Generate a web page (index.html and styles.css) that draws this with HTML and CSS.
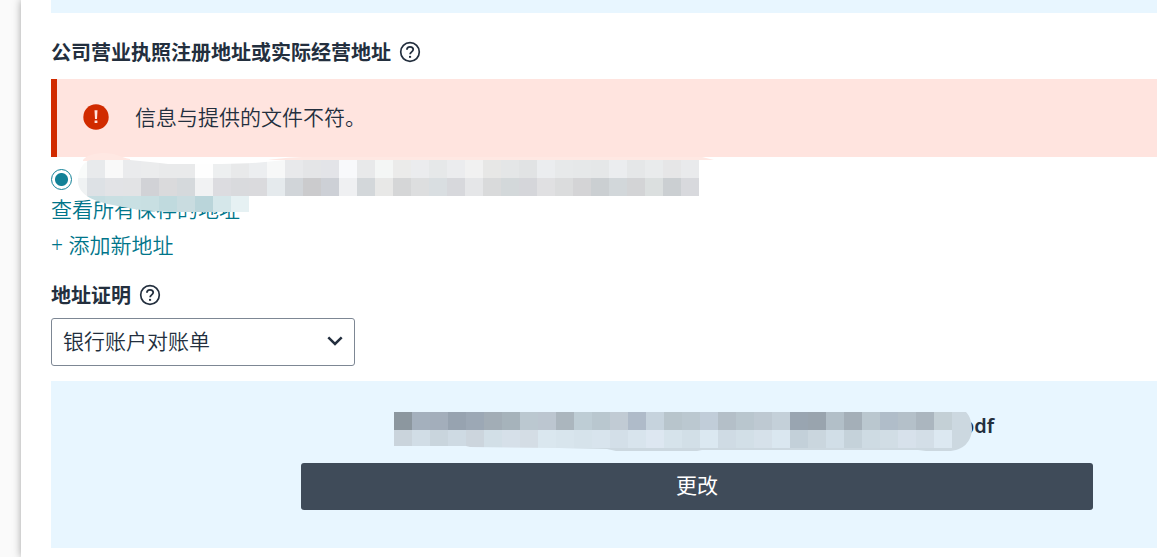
FILE: index.html
```
<!DOCTYPE html>
<html lang="zh-CN">
<head>
    <meta charset="UTF-8">
    <meta name="viewport" content="width=device-width, initial-scale=1.0">
    <title>地址信息</title>
    <link rel="stylesheet" href="styles.css">
</head>
<body>
    <main class="card">
        <div class="previous-panel"></div>

        <section class="address">
            <div class="heading">
                <h2>公司营业执照注册地址或实际经营地址</h2>
                <button type="button" class="help-button" aria-label="帮助">
                    <svg width="22" height="22" viewBox="0 0 22 22" fill="none" stroke="#232f3e">
                        <circle cx="11" cy="11" r="9.3" stroke-width="1.7"/>
                        <path d="M7.9 8.8C7.9 6.9 9.2 5.9 11 5.9s3.2 1 3.2 2.7c0 2.3-3.1 2.3-3.1 4.7" stroke-width="1.8"/>
                        <path d="M10 14.9h2.1v1.9H10z" fill="#232f3e" stroke="none"/>
                    </svg>
                </button>
            </div>

            <div class="alert" role="alert">
                <svg width="26" height="26" viewBox="0 0 26 26">
                    <circle cx="13" cy="13" r="12.7" fill="#d12b00"/>
                    <path d="M11.5 6.2h3l-.5 8.8h-2zM11.6 16.6h2.8v2.5h-2.8z" fill="#ffe4df"/>
                </svg>
                <p>信息与提供的文件不符。</p>
            </div>

            <div class="saved-address">
                <input type="radio" name="address" aria-label="已保存的地址" checked>
                <svg class="address-mask" width="640" height="62" viewBox="0 0 640 62" aria-hidden="true">
                    <clipPath id="addressClip">
                        <path d="M0 28C0 15 7 7 14 7H52C65 8 80 10 90 11H143C170 11 190 9 207 7H621V59H100C78 59 57 57 35 52C12 48 0 40 0 28Z"/>
                    </clipPath>
                    <path d="M5 7C9 2 17 0 27 0C36 0 42 4 52 6V8H5Z" fill="#ffe8e3"/>
                    <path d="M190 7C205 5 215 4 230 4H624L636 7Z" fill="#ffe8e3"/>
                    <g clip-path="url(#addressClip)">
                        <rect y="7" width="9" height="18" fill="#f9fbfa"/>
                        <rect y="25" width="9" height="18" fill="#eff2f3"/>
                        <g id="addressPixels"></g>
                    </g>
                </svg>
            </div>
            <a class="link" href="#">查看所有保存的地址</a>
            <a class="link" href="#">+ 添加新地址</a>
        </section>

        <section class="proof">
            <div class="heading">
                <h2><label for="proofType">地址证明</label></h2>
                <button type="button" class="help-button" aria-label="帮助">
                    <svg width="22" height="22" viewBox="0 0 22 22" fill="none" stroke="#232f3e">
                        <circle cx="11" cy="11" r="9.3" stroke-width="1.7"/>
                        <path d="M7.9 8.8C7.9 6.9 9.2 5.9 11 5.9s3.2 1 3.2 2.7c0 2.3-3.1 2.3-3.1 4.7" stroke-width="1.8"/>
                        <path d="M10 14.9h2.1v1.9H10z" fill="#232f3e" stroke="none"/>
                    </svg>
                </button>
            </div>
            <div class="select-box">
                <select id="proofType">
                    <option>银行账户对账单</option>
                </select>
                <svg width="16" height="10" viewBox="0 0 16 10" fill="none" stroke="#232f3e" stroke-width="2.5">
                    <path d="M1.3 1.4L8 8l6.7-6.6"/>
                </svg>
            </div>

            <div class="file-panel">
                <div class="file-name">
                    <svg width="578" height="39" viewBox="0 0 578 39" aria-hidden="true">
                        <path d="M558 0H572C576 4 578 11 578 18C577 29 570 39 554 39H532L524 38H308L303 39H222L213 37L165 36L160 34H558Z" fill="#ccd8e0"/>
                        <clipPath id="fileClip">
                            <path d="M0 0H578V36H160L76 35L72 34H0Z"/>
                        </clipPath>
                        <g id="filePixels" clip-path="url(#fileClip)"></g>
                    </svg>
                    <span>pdf</span>
                </div>
                <button type="button" class="change-button">更改</button>
            </div>
        </section>
    </main>

    <script>
        // Each row is a list of cell colours, every cell is 18px
        const addressRows = [
            'e8eaec f9f9f9 eaebed ebeced e9eaeb e9eaeb fefefe edeff0 e8e9ea eceef0 f7f8f8 e8e9eb e4e5e7 e3e4e8 f8f9fb e8e9ea f4f6f5 ebebea ebecee e6e8e9 ebecee f1f1f1 e7e7e6 e4e6e7 e1e3e4 ebedef e7e9ea e6e8e9 e5e7e8 ebedef e5e7e8 e9ebec e6e6e7 e9eaec',
            'dde1e5 e2e3e6 e2e3e5 d1d2d6 dadadc d5d9dc f1f2f3 dcdce0 d9dadd dadadd e5eaed d1d5d9 cbcbcd cdd0d6 eff0f2 d3d7da e8e8e7 d5d6d7 dddedf d9dee1 d7d8dc e5e6e8 d9dadb d3d8da d5d6da e0e0e2 dbdcdd d4d4d6 cbcfd2 d2d7da d3d4d6 dbdfdf cbcfd2 d8d9dd',
            'c5dde1 c9dfe2 c9e0e3 c8dfe2 c0dade c9dce0 bad5da d5e7ea e6f1f3'
        ];
        const fileRows = [
            '8c979f a4b0bd a3aebb 97a3b0 9ca8b5 a2adb6 a6b3bb bbc8d0 bcc6d0 abb6be becdd5 b9c7cf c1cbd4 afbbc9 c6d3dd b8c5cc bbc8d0 c1cdd9 b4bfc8 b9c6ce bec9d2 c4d0d9 99a5b1 99a4ae b2bfc8 a4afb8 bac7cf b0bdc9 b4c0c9 abb6bf c4d0d6',
            'cad4dc d1dde6 c9d5dd cedae3 ccd5dd d2dfe7 d6e0e9 d4dde5 dae7ef d8e5ed d6e3eb d8e4ed d3dfe8 d8e4ed dde7f1 d6e3eb d2dfe7 dbe8f1 cfdbe4 d2dfe7 d6e1ea dae7f0 c3d0d9 cad6de d1dee7 c5d2da cedbe3 d1dde5 d7e1eb d3dee7 dce8f1'
        ];

        function drawPixels(id, rows, left, top) {
            const size = 18;
            let cells = '';
            rows.forEach(function(row, y) {
                row.split(' ').forEach(function(color, x) {
                    cells += `<rect x="${left + x * size}" y="${top + y * size}" width="${size}" height="${size}" fill="#${color}"/>`;
                });
            });
            document.getElementById(id).innerHTML = cells;
        }

        drawPixels('addressPixels', addressRows, 9, 7);
        drawPixels('filePixels', fileRows, 0, 0);
    </script>
</body>
</html>
```
FILE: styles.css
```
* {
    box-sizing: border-box;
}

body {
    margin: 0;
    background-color: #fafafa;
    color: #232f3e;
    font-family: "Noto Sans", "Noto Sans CJK SC", sans-serif;
    font-size: 21px;
    font-weight: 350;
    line-height: 36px;
    overflow-x: hidden;
}

h2, p {
    margin: 0;
}

.card {
    min-height: 100vh;
    margin-left: 21px;
    padding-left: 30px;
    background-color: white;
    box-shadow: 0 0 8px rgba(0, 0, 0, 0.35);
}

.previous-panel {
    height: 13px;
    background-color: #e8f6ff;
}

.heading {
    display: flex;
    align-items: center;
    gap: 8px;
}

.heading h2 {
    padding-top: 2px;
    font-size: 20px;
    font-weight: 700;
    line-height: 28px;
}

.help-button {
    display: flex;
    padding: 0;
    border: none;
    background: none;
    cursor: pointer;
}

.address {
    display: flex;
    flex-direction: column;
    align-items: flex-start;
    padding-top: 24px;
}

.alert {
    display: flex;
    align-items: center;
    gap: 26px;
    align-self: stretch;
    height: 78px;
    margin-top: 12px;
    padding: 0 26px 2px;
    border-left: 6px solid #d12b00;
    background-color: #ffe4df;
}

.saved-address {
    position: relative;
    display: flex;
    align-items: center;
    height: 34px;
    padding-top: 11px;
}

.saved-address input {
    appearance: none;
    width: 21px;
    height: 21px;
    margin: 0;
    border: 1px solid #128197;
    border-radius: 50%;
    background: radial-gradient(circle, #128197 6px, white 7px);
}

/* Lies over the alert edge and the first link */
.address-mask {
    position: absolute;
    top: -4px;
    left: 27px;
    z-index: 1;
    pointer-events: none;
}

.link {
    color: #00758a;
    text-decoration: none;
}

.proof {
    padding-top: 17px;
}

.select-box {
    position: relative;
    width: 304px;
    margin-top: 8px;
}

.select-box select {
    appearance: none;
    display: block;
    width: 100%;
    height: 48px;
    padding: 0 40px 2px 11px;
    border: 1px solid #7d8794;
    border-radius: 3px;
    background-color: white;
    color: #232f3e;
    font: inherit;
}

.select-box svg {
    position: absolute;
    top: 18px;
    right: 12px;
    pointer-events: none;
}

.file-panel {
    height: 167px;
    margin-top: 15px;
    padding: 31px 64px 0 250px;
    background-color: #e8f6ff;
}

.file-name {
    display: flex;
    justify-content: center;
    height: 39px;
    padding-right: 6px;
    font-size: 20px;
    font-weight: 600;
    line-height: 28px;
}

.file-name svg {
    position: relative;
    z-index: 1;
    flex-shrink: 0;
    margin-right: -10px;
}

.change-button {
    display: block;
    width: 100%;
    height: 47px;
    margin-top: 12px;
    padding-bottom: 4px;
    border: none;
    border-radius: 3px;
    background-color: #3f4b59;
    color: white;
    font: inherit;
    font-weight: 400;
    cursor: pointer;
}
```
